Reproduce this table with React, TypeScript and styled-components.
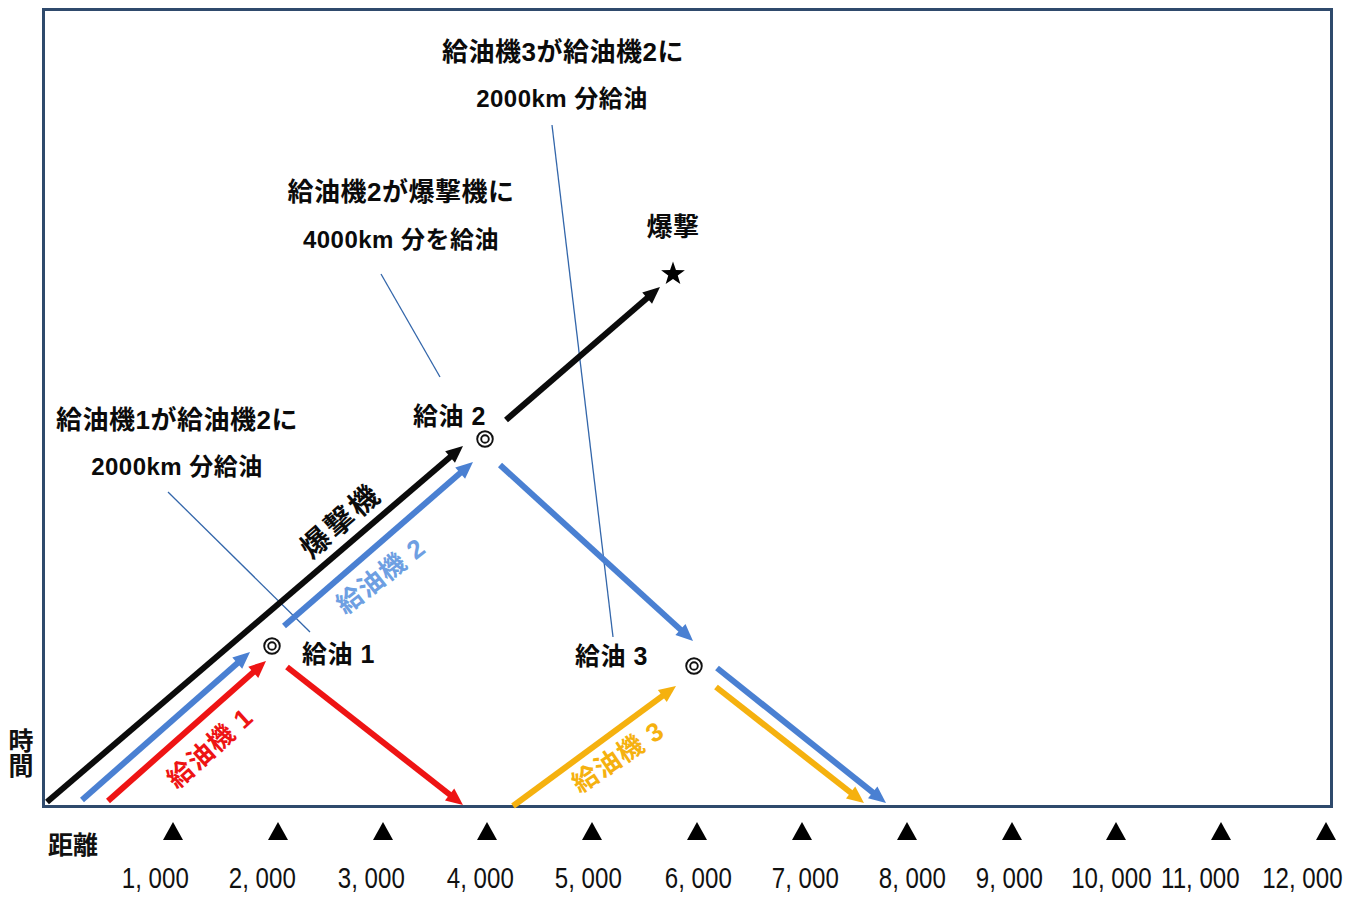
import React from 'react';
import styled, { createGlobalStyle } from 'styled-components';

const INK = '#0b0b0b';
const BLUE = '#4a80d2';
const SOFT_BLUE = '#6e9fe2';
const RED = '#ee1414';
const AMBER = '#f5b10f';
const LEADER = '#3366aa';
const FRAME = '#2f4a6c';

interface Arrow {
  x1: number;
  y1: number;
  x2: number;
  y2: number;
  color: string;
}

interface Caption {
  text: string;
  x: number;
  y: number;
  size?: number;
  anchor?: 'start' | 'middle';
}

interface SlantedLabel {
  text: string;
  x: number;
  y: number;
  angle: number;
  color: string;
  size: number;
  spacing: number;
}

// flight paths, page coordinates, (x2, y2) is the arrow tip
const ARROWS: Arrow[] = [
  { x1: 47, y1: 802, x2: 463, y2: 446, color: INK },
  { x1: 506, y1: 420, x2: 660, y2: 287, color: INK },
  { x1: 82, y1: 800, x2: 250, y2: 652, color: BLUE },
  { x1: 108, y1: 801, x2: 266, y2: 661, color: RED },
  { x1: 284, y1: 626, x2: 473, y2: 462, color: BLUE },
  { x1: 287, y1: 667, x2: 463, y2: 805, color: RED },
  { x1: 500, y1: 465, x2: 693, y2: 641, color: BLUE },
  { x1: 513, y1: 806, x2: 676, y2: 686, color: AMBER },
  { x1: 717, y1: 668, x2: 886, y2: 803, color: BLUE },
  { x1: 716, y1: 687, x2: 864, y2: 803, color: AMBER },
];

const LEADERS = [
  [168, 492, 310, 632],
  [381, 274, 440, 377],
  [552, 125, 613, 637],
];

const CAPTIONS: Caption[] = [
  { text: '給油機3が給油機2に', x: 563, y: 52, size: 26 },
  { text: '2000km 分給油', x: 562, y: 98, size: 24 },
  { text: '給油機2が爆撃機に', x: 401, y: 192, size: 26 },
  { text: '4000km 分を給油', x: 401, y: 239, size: 24 },
  { text: '爆撃', x: 673, y: 227, size: 26 },
  { text: '給油機1が給油機2に', x: 177, y: 420, size: 26 },
  { text: '2000km 分給油', x: 177, y: 466, size: 24 },
  { text: '給油 1', x: 302, y: 654, anchor: 'start' },
  { text: '給油 2', x: 413, y: 416, anchor: 'start' },
  { text: '給油 3', x: 575, y: 656, anchor: 'start' },
];

const SLANTED: SlantedLabel[] = [
  { text: '爆撃機', x: 341, y: 521, angle: -41, color: INK, size: 29, spacing: 3 },
  { text: '給油機 2', x: 381, y: 576, angle: -38, color: SOFT_BLUE, size: 26, spacing: 1 },
  { text: '給油機 1', x: 210, y: 748, angle: -42, color: RED, size: 26, spacing: 1 },
  { text: '給油機 3', x: 618, y: 757, angle: -34, color: AMBER, size: 26, spacing: 1 },
];

const REFUEL_POINTS = [
  [272, 646],
  [485, 439],
  [694, 666],
];

const TICKS = [
  { label: '1, 000', shift: -18 },
  { label: '2, 000', shift: -15 },
  { label: '3, 000', shift: -11 },
  { label: '4, 000', shift: -7 },
  { label: '5, 000', shift: -4 },
  { label: '6, 000', shift: 1 },
  { label: '7, 000', shift: 3 },
  { label: '8, 000', shift: 6 },
  { label: '9, 000', shift: -2 },
  { label: '10, 000', shift: -5 },
  { label: '11, 000', shift: -21 },
  { label: '12, 000', shift: -24 },
];

const GlobalStyle = createGlobalStyle`
  html, body {
    margin: 0;
    padding: 0;
    background: #fff;
    overflow: hidden;
  }
  body {
    font-family: 'Noto Sans CJK JP', 'Liberation Sans', sans-serif;
    color: #111;
  }
`;

const Page = styled.div`
  width: 1362px;
  height: 903px;
  padding-top: 8px;
  box-sizing: border-box;
  overflow: hidden;
`;

const ChartRow = styled.div`
  display: grid;
  grid-template-columns: 42px 1291px;
  height: 800px;
`;

const TimeLabel = styled.div`
  align-self: end;
  justify-self: start;
  margin: 0 0 30px 8px;
  writing-mode: vertical-rl;
  font-size: 25px;
  font-weight: 700;
  line-height: 25px;
  letter-spacing: 0;
`;

const ChartFrame = styled.div`
  border: 3px solid ${FRAME};
  box-sizing: border-box;
  height: 800px;
`;

const ChartCanvas = styled.svg`
  display: block;
  width: 100%;
  height: 100%;
  overflow: visible;
`;

const AxisGrid = styled.div`
  display: grid;
  grid-template-columns: 120.6px repeat(12, 104.82px);
  align-items: start;
`;

const TickRow = styled(AxisGrid)`
  margin-top: 14px;
  height: 42px;
`;

const NumberRow = styled(AxisGrid)`
  height: 30px;
`;

const DistanceLabel = styled.div`
  padding: 9px 0 0 48px;
  font-size: 25px;
  font-weight: 700;
  line-height: 25px;
  white-space: nowrap;
`;

const AxisCell = styled.div`
  display: flex;
  justify-content: center;
`;

const Triangle = styled.div`
  width: 0;
  height: 0;
  border-left: 10.5px solid transparent;
  border-right: 10.5px solid transparent;
  border-bottom: 18px solid #000;
`;

const NumberText = styled.span<{ $shift: number }>`
  font-family: 'Liberation Sans', Arial, sans-serif;
  font-size: 29px;
  line-height: 28px;
  white-space: nowrap;
  color: #111;
  transform: translateX(${(p) => p.$shift}px) scaleX(0.83);
`;

const Label = styled.text<{ $size?: number; $tone?: string; $spacing?: number }>`
  font-family: 'Liberation Sans', 'Noto Sans CJK JP', sans-serif;
  font-weight: 700;
  font-size: ${(p) => p.$size ?? 25}px;
  letter-spacing: ${(p) => p.$spacing ?? 0.5}px;
  fill: ${(p) => p.$tone ?? INK};
`;

const FlightArrow: React.FC<Arrow> = ({ x1, y1, x2, y2, color }) => {
  const len = Math.hypot(x2 - x1, y2 - y1);
  const ux = (x2 - x1) / len;
  const uy = (y2 - y1) / len;
  const head = 17;
  const half = 7.5;
  const bx = x2 - ux * head;
  const by = y2 - uy * head;
  const points = [
    `${x2},${y2}`,
    `${bx - uy * half},${by + ux * half}`,
    `${bx + uy * half},${by - ux * half}`,
  ].join(' ');
  return (
    <g>
      <line
        x1={x1}
        y1={y1}
        x2={x2 - ux * (head - 2)}
        y2={y2 - uy * (head - 2)}
        stroke={color}
        strokeWidth={6}
      />
      <polygon points={points} fill={color} />
    </g>
  );
};

const starPoints = (cx: number, cy: number, outer: number, inner: number) => {
  const pts: string[] = [];
  for (let i = 0; i < 10; i++) {
    const r = i % 2 === 0 ? outer : inner;
    const a = -Math.PI / 2 + (i * Math.PI) / 5;
    pts.push(`${(cx + r * Math.cos(a)).toFixed(2)},${(cy + r * Math.sin(a)).toFixed(2)}`);
  }
  return pts.join(' ');
};

const RefuelChart: React.FC = () => (
  <ChartCanvas viewBox="45 11 1285 794">
    {LEADERS.map(([x1, y1, x2, y2], i) => (
      <line key={i} x1={x1} y1={y1} x2={x2} y2={y2} stroke={LEADER} strokeWidth={1.3} />
    ))}

    {ARROWS.map((a, i) => (
      <FlightArrow key={i} {...a} />
    ))}

    {REFUEL_POINTS.map(([cx, cy], i) => (
      <g key={i} fill="none" stroke="#111" strokeWidth={1.9}>
        <circle cx={cx} cy={cy} r={7.8} />
        <circle cx={cx} cy={cy} r={3.8} />
      </g>
    ))}

    <polygon points={starPoints(673, 274, 12.5, 5)} fill="#000" />

    {CAPTIONS.map((c, i) => (
      <Label
        key={i}
        x={c.x}
        y={c.y}
        $size={c.size}
        textAnchor={c.anchor ?? 'middle'}
        dominantBaseline="central"
      >
        {c.text}
      </Label>
    ))}

    {SLANTED.map((s, i) => (
      <Label
        key={i}
        x={s.x}
        y={s.y}
        $size={s.size}
        $tone={s.color}
        $spacing={s.spacing}
        textAnchor="middle"
        dominantBaseline="central"
        transform={`rotate(${s.angle} ${s.x} ${s.y})`}
      >
        {s.text}
      </Label>
    ))}
  </ChartCanvas>
);

export default function App() {
  return (
    <>
      <GlobalStyle />
      <Page>
        <ChartRow>
          <TimeLabel>時間</TimeLabel>
          <ChartFrame>
            <RefuelChart />
          </ChartFrame>
        </ChartRow>

        <TickRow>
          <DistanceLabel>距離</DistanceLabel>
          {TICKS.map((t) => (
            <AxisCell key={t.label}>
              <Triangle />
            </AxisCell>
          ))}
        </TickRow>

        <NumberRow>
          <div />
          {TICKS.map((t) => (
            <AxisCell key={t.label}>
              <NumberText $shift={t.shift}>{t.label}</NumberText>
            </AxisCell>
          ))}
        </NumberRow>
      </Page>
    </>
  );
}
